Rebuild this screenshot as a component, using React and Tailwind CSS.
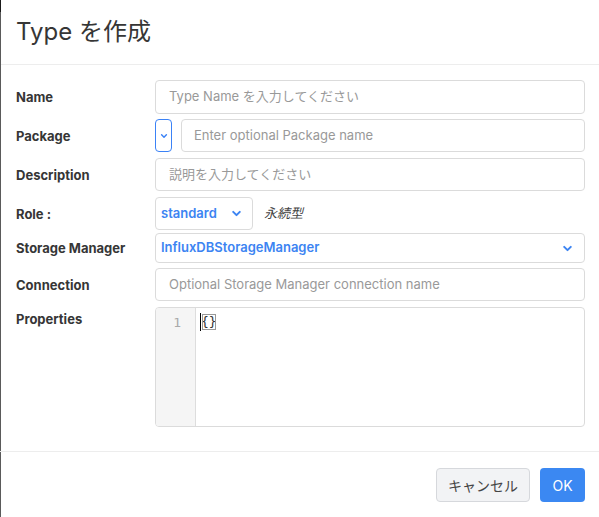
import React from "react";

const Chevron = ({ className = "", size = 10 }) => (
  <svg width={size} height={size} viewBox="0 0 10 10" className={className}>
    <path d="M2 3.5 L5 6.5 L8 3.5" fill="none" stroke="currentColor" strokeWidth="1.8" strokeLinecap="round" strokeLinejoin="round" />
  </svg>
);

function Row({ label, children, className = "", labelClass = "items-center", labelPad = "" }) {
  return (
    <div className={`flex ${labelClass} ${className}`}>
      <div className={`w-[155px] shrink-0 pl-4 text-[13px] font-bold text-[#363636] ${labelPad}`}>{label}</div>
      <div className="flex-1 pr-[14px] flex items-center">{children}</div>
    </div>
  );
}

const inputCls =
  "w-full border border-[#dbdbdb] rounded-[4px] px-[13px] text-[13px] text-[#999] flex items-center bg-white";

export default function App() {
  return (
    <div className="relative w-[599px] h-[517px] bg-white overflow-hidden" style={{ fontFamily: "Inter, 'Noto Sans CJK JP', sans-serif" }}>
      <div className="absolute left-0 top-0 w-px h-full bg-[#5a5a5a]" />
      <div className="absolute left-0 top-0 w-px h-[12px] bg-[#1a1a1a]" />
      <div className="h-[65px] border-b border-[#ededed] flex items-center pl-4">
        <div className="text-[24px] text-[#363636] leading-none">Type を作成</div>
      </div>
      <div className="pt-[15px]">
        <Row label="Name" labelPad="pt-[2px]">
          <div className={`${inputCls} h-[34px]`}>Type Name を入力してください</div>
        </Row>
        <Row label="Package" className="mt-[5px]" labelPad="pt-[2px]">
          <div className="w-[17px] h-[33px] border border-[#3b82f6] rounded-[4px] flex items-center justify-center text-[#3b82f6] shrink-0">
            <Chevron size={8} />
          </div>
          <div className={`${inputCls} h-[33px] ml-[9px] pl-[12px]`}>Enter optional Package name</div>
        </Row>
        <Row label="Description" className="mt-[6px]" labelPad="pt-[2px]">
          <div className={`${inputCls} h-[33px]`}>説明を入力してください</div>
        </Row>
        <Row label="Role :" className="mt-[6px]" labelPad="pt-[2px]">
          <div className="w-[98px] h-[33px] border border-[#dbdbdb] rounded-[4px] flex items-center justify-between pl-[5px] pr-[10px] text-[13px] font-semibold text-[#3c84f2] shrink-0">
            <span>standard</span>
            <Chevron size={11} />
          </div>
          <span className="ml-[11px] text-[13px] italic text-[#444]">永続型</span>
        </Row>
        <Row label="Storage Manager" className="mt-[3px]" labelPad="pt-[2px]">
          <div className="w-full h-[30px] border border-[#dbdbdb] rounded-[4px] flex items-center justify-between pl-[5px] pr-[11px] text-[13px] font-semibold text-[#3c84f2]">
            <span>InfluxDBStorageManager</span>
            <Chevron size={11} />
          </div>
        </Row>
        <Row label="Connection" className="mt-[5px]" labelPad="pt-[2px]">
          <div className={`${inputCls} h-[33px]`}>Optional Storage Manager connection name</div>
        </Row>
        <Row label="Properties" className="mt-[6px]" labelClass="items-start" labelPad="pt-[3px]">
          <div className="w-full h-[120px] border border-[#dbdbdb] rounded-[4px] flex overflow-hidden">
            <div className="w-[40px] bg-[#f5f5f5] border-r border-[#ddd] text-right pr-[14px] pt-[5px] text-[13px] text-[#aaa]" style={{ fontFamily: "'DejaVu Sans Mono', monospace" }}>1</div>
            <div className="pl-[4px] pt-[5px] text-[13px] text-[#333] flex items-start" style={{ fontFamily: "'DejaVu Sans Mono', monospace" }}>
              <span className="w-px h-[18px] bg-black" />
              <span className="leading-[18px] outline outline-1 outline-[#999] -outline-offset-2">{"{}"}</span>
            </div>
          </div>
        </Row>
      </div>
      <div className="absolute left-0 right-0 top-[451px] border-t border-[#ededed] h-[66px] flex items-start justify-end pr-[14px] pt-[16px] gap-[10px]">
        <div className="h-[34px] w-[94px] border border-[#d6d8dc] bg-[#f2f3f5] rounded-[4px] flex items-center justify-center text-[14px] text-[#444]">キャンセル</div>
        <div className="h-[34px] w-[45px] bg-[#3b88f2] rounded-[4px] flex items-center justify-center text-[14px] text-white">OK</div>
      </div>
    </div>
  );
}
